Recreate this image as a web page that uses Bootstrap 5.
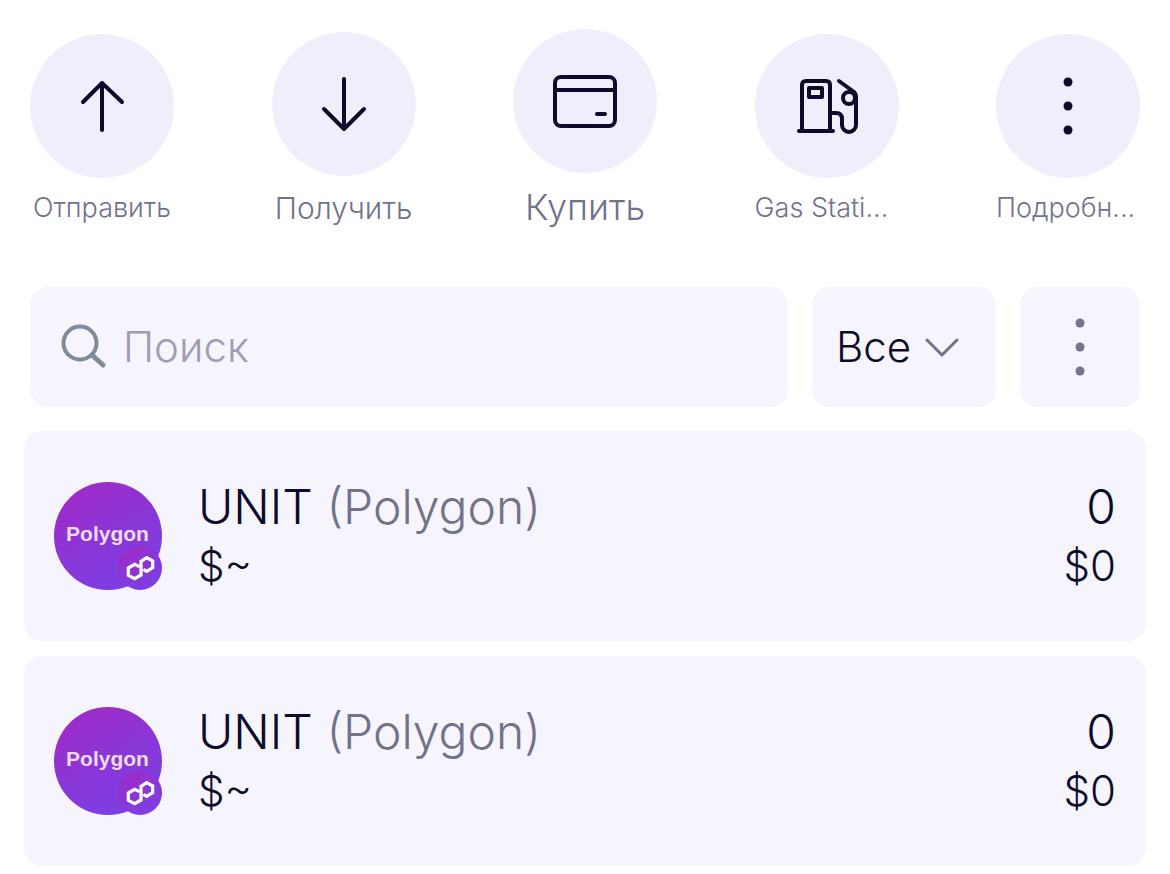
<!DOCTYPE html>
<html lang="ru">
<head>
<meta charset="utf-8">
<meta name="viewport" content="width=device-width, initial-scale=1">
<title>Кошелёк</title>
<link href="https://cdn.jsdelivr.net/npm/bootstrap@5.3.0/dist/css/bootstrap.min.css" rel="stylesheet">
<style>
  body { font-family: Inter, "Noto Sans", sans-serif; font-weight: 350; color: #0d0a2c; background: #fff; }
  .actions { padding: 29px 30px 59px; }
  .action { width: 144px; border: 0; background: none; padding: 0; color: #72728a; font-size: 27px; font-weight: 350; line-height: 32px; gap: 14px; }
  .action-md { font-size: 30px; line-height: 36px; }
  .action-lg { font-size: 36px; line-height: 42px; gap: 13px; }
  .disc { width: 144px; height: 144px; background: #f0eefb; }
  .stroke-dark { fill: none; stroke: #0d0a2c; stroke-width: 4; stroke-linecap: round; stroke-linejoin: round; }
  .tools { padding: 0 30px; gap: 24px; }
  .tile { background: #f6f5fd; border: 0; border-radius: 18px; height: 120px; color: #0d0a2c; font-size: 42px; font-weight: 350; line-height: 50px; }
  .search { padding: 0 30px; gap: 15px; min-width: 0; }
  .search input { border: 0; background: none; outline: 0; padding: 0; width: 0; font-weight: 350; }
  .search input::placeholder { color: #a09db2; opacity: 1; }
  .filter { width: 184px; gap: 14px; padding: 0 24px; }
  .more { width: 120px; }
  .tokens { padding: 24px 24px 8px; gap: 15px; }
  .token { background: #f6f5fd; border-radius: 18px; height: 210px; padding: 0 30px; gap: 36px; }
  .coin { width: 108px; height: 108px; }
  .token-name { font-size: 48px; line-height: 60px; }
  .token-sub { font-size: 42px; line-height: 58px; }
  .chain { color: #72728a; }
</style>
</head>
<body>
<svg width="0" height="0" class="position-absolute" aria-hidden="true">
  <defs>
    <linearGradient id="coinFill" x1="0" y1="0" x2="0.6" y2="1"><stop offset="0" stop-color="#a229c5"/><stop offset="1" stop-color="#7b3fe4"/></linearGradient>
    <symbol id="coin" viewBox="0 0 108 108">
      <circle cx="54" cy="54" r="54" fill="url(#coinFill)"/>
      <circle cx="86" cy="86" r="22" fill="url(#coinFill)"/>
      <path d="M85.300 84.700L80.700 82.300L74.300 86V93.300L80.700 96.700L87 93V79.300L92.700 75.700L98.700 79V85.700L92.700 89.300L89.300 87.300" fill="none" stroke="#fff" stroke-width="3.200"/>
      <text x="53.500" y="59" text-anchor="middle" font-family="Liberation Sans, sans-serif" font-weight="700" font-size="21" fill="#f0dcfa">Polygon</text>
    </symbol>
  </defs>
</svg>

<nav class="actions d-flex justify-content-between align-items-center" aria-label="Действия">
  <button type="button" class="action d-flex flex-column align-items-center">
    <span class="disc rounded-circle"><svg width="144" height="144" class="d-block stroke-dark"><path d="M72 96V49M53 68L72 49L92 68"/></svg></span>
    <span class="text-nowrap">Отправить</span>
  </button>
  <button type="button" class="action action-md d-flex flex-column align-items-center">
    <span class="disc rounded-circle"><svg width="144" height="144" class="d-block stroke-dark"><path d="M72 47V97M52 77L72 97L92 77"/></svg></span>
    <span class="text-nowrap">Получить</span>
  </button>
  <button type="button" class="action action-lg d-flex flex-column align-items-center">
    <span class="disc rounded-circle"><svg width="144" height="144" class="d-block stroke-dark"><rect x="42" y="48" width="60" height="49" rx="6"/><path d="M42 61H102M84 85H92"/></svg></span>
    <span class="text-nowrap">Купить</span>
  </button>
  <button type="button" class="action d-flex flex-column align-items-start">
    <span class="disc rounded-circle"><svg width="144" height="144" class="d-block stroke-dark"><path d="M47 96V51Q47 47 51 47H71Q75 47 75 51V96M44 97H78M54 54H67V63H54ZM76 79H81Q87 79 87 85V91A6.500 6.500 0 0 0 101 91V62Q101 60 99 58L84 47"/><circle cx="94" cy="64" r="6"/></svg></span>
    <span class="text-nowrap">Gas Stati...</span>
  </button>
  <button type="button" class="action d-flex flex-column align-items-start">
    <span class="disc rounded-circle"><svg width="144" height="144" class="d-block" fill="#0d0a2c"><circle cx="72" cy="48" r="4.500"/><circle cx="72" cy="72" r="4.500"/><circle cx="72" cy="96" r="4.500"/></svg></span>
    <span class="text-nowrap">Подробн...</span>
  </button>
</nav>

<main>
  <div class="tools d-flex">
    <label class="tile search d-flex flex-fill align-items-center">
      <svg width="48" height="48" class="flex-shrink-0" fill="none" stroke="#7f8c99" stroke-width="4" stroke-linecap="round"><circle cx="20" cy="20" r="16.500"/><path d="M32 32L43 42" stroke-width="5"/></svg>
      <input type="search" class="flex-fill" placeholder="Поиск" aria-label="Поиск">
    </label>
    <button type="button" class="tile filter d-flex flex-shrink-0 align-items-center">
      <span>Все</span>
      <svg width="34" height="20" fill="none" stroke="#72728a" stroke-width="3" stroke-linecap="round" stroke-linejoin="round"><path d="M2 3L17 18L32 3"/></svg>
    </button>
    <button type="button" class="tile more flex-shrink-0 p-0" aria-label="Ещё">
      <svg width="120" height="120" class="d-block" fill="#72728a"><circle cx="60" cy="36" r="4.500"/><circle cx="60" cy="60" r="4.500"/><circle cx="60" cy="84" r="4.500"/></svg>
    </button>
  </div>

  <ul class="tokens list-unstyled d-flex flex-column mb-0">
    <li class="token d-flex align-items-center">
      <svg class="coin flex-shrink-0"><use href="#coin"/></svg>
      <div class="flex-fill">
        <div class="token-name">UNIT <span class="chain">(Polygon)</span></div>
        <div class="token-sub">$~</div>
      </div>
      <div class="text-end">
        <div class="token-name">0</div>
        <div class="token-sub">$0</div>
      </div>
    </li>
    <li class="token d-flex align-items-center">
      <svg class="coin flex-shrink-0"><use href="#coin"/></svg>
      <div class="flex-fill">
        <div class="token-name">UNIT <span class="chain">(Polygon)</span></div>
        <div class="token-sub">$~</div>
      </div>
      <div class="text-end">
        <div class="token-name">0</div>
        <div class="token-sub">$0</div>
      </div>
    </li>
  </ul>
</main>
<script src="https://cdn.jsdelivr.net/npm/bootstrap@5.3.0/dist/js/bootstrap.bundle.min.js"></script>
</body>
</html>
